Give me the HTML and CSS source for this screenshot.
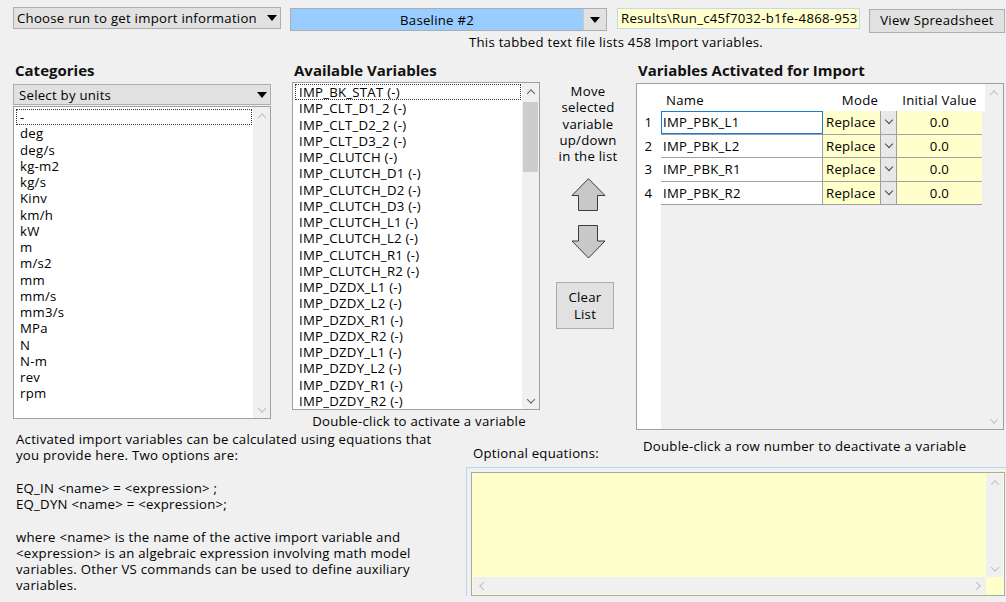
FILE: index.html
```html
<!DOCTYPE html>
<html>
<head>
<meta charset="utf-8">
<link rel="stylesheet" href="styles.css">
</head>
<body>
<div class="app">
  <div class="topbar">
    <div class="combo combo-run"><span class="combo-text">Choose run to get import information</span><span class="tri"></span></div>
    <div class="combo combo-base"><span class="base-val">Baseline #2</span><span class="base-btn"><span class="tri"></span></span></div>
    <div class="pathbox">Results\Run_c45f7032-b1fe-4868-953</div>
    <div class="btn btn-view">View Spreadsheet</div>
  </div>
  <div class="info">This tabbed text file lists 458 Import variables.</div>

  <div class="main">
    <div class="col col-cat">
      <div class="heading">Categories</div>
      <div class="combo combo-units"><span class="combo-text">Select by units</span><span class="tri"></span></div>
      <div class="listbox cat-list">
        <div class="items">
          <div class="item focus">-</div>
          <div class="item">deg</div>
          <div class="item">deg/s</div>
          <div class="item">kg-m2</div>
          <div class="item">kg/s</div>
          <div class="item">Kinv</div>
          <div class="item">km/h</div>
          <div class="item">kW</div>
          <div class="item">m</div>
          <div class="item">m/s2</div>
          <div class="item">mm</div>
          <div class="item">mm/s</div>
          <div class="item">mm3/s</div>
          <div class="item">MPa</div>
          <div class="item">N</div>
          <div class="item">N-m</div>
          <div class="item">rev</div>
          <div class="item">rpm</div>
        </div>
        <div class="vscroll light">
          <span class="sarrow up"></span>
          <span class="strack"></span>
          <span class="sarrow down"></span>
        </div>
      </div>
    </div>

    <div class="col col-avail">
      <div class="heading">Available Variables</div>
      <div class="listbox avail-list">
        <div class="items">
          <div class="item focus">IMP_BK_STAT (-)</div>
          <div class="item">IMP_CLT_D1_2 (-)</div>
          <div class="item">IMP_CLT_D2_2 (-)</div>
          <div class="item">IMP_CLT_D3_2 (-)</div>
          <div class="item">IMP_CLUTCH (-)</div>
          <div class="item">IMP_CLUTCH_D1 (-)</div>
          <div class="item">IMP_CLUTCH_D2 (-)</div>
          <div class="item">IMP_CLUTCH_D3 (-)</div>
          <div class="item">IMP_CLUTCH_L1 (-)</div>
          <div class="item">IMP_CLUTCH_L2 (-)</div>
          <div class="item">IMP_CLUTCH_R1 (-)</div>
          <div class="item">IMP_CLUTCH_R2 (-)</div>
          <div class="item">IMP_DZDX_L1 (-)</div>
          <div class="item">IMP_DZDX_L2 (-)</div>
          <div class="item">IMP_DZDX_R1 (-)</div>
          <div class="item">IMP_DZDX_R2 (-)</div>
          <div class="item">IMP_DZDY_L1 (-)</div>
          <div class="item">IMP_DZDY_L2 (-)</div>
          <div class="item">IMP_DZDY_R1 (-)</div>
          <div class="item">IMP_DZDY_R2 (-)</div>
        </div>
        <div class="vscroll dark">
          <span class="sarrow up"></span>
          <span class="strack"><span class="thumb"></span></span>
          <span class="sarrow down"></span>
        </div>
      </div>
      <div class="caption">Double-click to activate a variable</div>
    </div>

    <div class="col col-move">
      <div class="move-text">Move<br>selected<br>variable<br>up/down<br>in the list</div>
      <svg class="arrow arrow-up" width="35" height="34" viewBox="0 0 35 34">
        <polygon points="17.5,0.7 34,17.5 26.5,17.5 26.5,32.5 7.5,32.5 7.5,17.5 1,17.5" fill="#c8c8c8" stroke="#3c3c3c" stroke-width="1"/>
      </svg>
      <svg class="arrow arrow-down" width="35" height="34" viewBox="0 0 35 34">
        <polygon points="7.5,0.5 26.5,0.5 26.5,16 34,16 17.5,33 1,16 7.5,16" fill="#c8c8c8" stroke="#3c3c3c" stroke-width="1"/>
      </svg>
      <div class="btn btn-clear">Clear<br>List</div>
    </div>

    <div class="col col-active">
      <div class="heading">Variables Activated for Import</div>
      <div class="grid">
        <div class="rownums">
          <div class="rn-head"></div>
          <div class="rn">1</div>
          <div class="rn">2</div>
          <div class="rn">3</div>
          <div class="rn">4</div>
        </div>
        <div class="cells">
          <div class="grow ghead">
            <div class="c c-name">Name</div>
            <div class="c c-modehead">Mode</div>
            <div class="c c-init">Initial Value</div>
          </div>
          <div class="grow gr">
            <div class="c c-name sel">IMP_PBK_L1</div>
            <div class="c c-mode">Replace</div>
            <div class="c c-dd"><span class="chev"></span></div>
            <div class="c c-init">0.0</div>
          </div>
          <div class="grow gr">
            <div class="c c-name">IMP_PBK_L2</div>
            <div class="c c-mode">Replace</div>
            <div class="c c-dd"><span class="chev"></span></div>
            <div class="c c-init">0.0</div>
          </div>
          <div class="grow gr">
            <div class="c c-name">IMP_PBK_R1</div>
            <div class="c c-mode">Replace</div>
            <div class="c c-dd"><span class="chev"></span></div>
            <div class="c c-init">0.0</div>
          </div>
          <div class="grow gr">
            <div class="c c-name">IMP_PBK_R2</div>
            <div class="c c-mode">Replace</div>
            <div class="c c-dd"><span class="chev"></span></div>
            <div class="c c-init">0.0</div>
          </div>
          <div class="gfill"></div>
        </div>
        <div class="vscroll light grid-scroll">
          <span class="sarrow up"></span>
          <span class="strack"></span>
          <span class="sarrow down"></span>
        </div>
      </div>
    </div>
  </div>

  <div class="bottom">
    <div class="help">Activated import variables can be calculated using equations that<br>you provide here. Two options are:<br><br>EQ_IN &lt;name&gt; = &lt;expression&gt; ;<br>EQ_DYN &lt;name&gt; = &lt;expression&gt;;<br><br>where &lt;name&gt; is the name of the active import variable and<br>&lt;expression&gt; is an algebraic expression involving math model<br>variables. Other VS commands can be used to define auxiliary<br>variables.</div>
    <div class="eq">
      <div class="eq-head">
        <div class="eq-label">Optional equations:</div>
        <div class="eq-caption">Double-click a row number to deactivate a variable</div>
      </div>
      <div class="eq-frame">
        <div class="eq-box">
          <div class="eq-main">
            <div class="eq-text"></div>
            <div class="vscroll light eq-vs">
              <span class="sarrow up"></span>
              <span class="strack"></span>
              <span class="sarrow down"></span>
            </div>
          </div>
          <div class="eq-hrow">
            <div class="hscroll">
              <span class="sarrow left"></span>
              <span class="htrack"></span>
              <span class="sarrow right"></span>
            </div>
            <div class="eq-corner"></div>
          </div>
        </div>
      </div>
    </div>
  </div>
</div>
</body>
</html>
```

FILE: styles.css
```css
* { box-sizing: border-box; }

body {
  margin: 0;
  background: #f0f0f0;
  font-family: "Open Sans", "Noto Sans", sans-serif;
  font-size: 13.2px;
  letter-spacing: 0.25px;
  color: #000;
}

.app {
  width: 1006px;
  height: 602px;
  overflow: hidden;
}

/* ---------- top bar ---------- */
.topbar {
  display: flex;
  align-items: flex-start;
  padding: 7px 0 0 13px;
  height: 34px;
}

.combo {
  display: flex;
  align-items: center;
  background: #e1e1e1;
  border: 1px solid #adadad;
  height: 22px;
  white-space: nowrap;
}

.combo-text {
  flex: 1;
  padding-left: 3px;
  line-height: 18px;
}

.tri {
  width: 0;
  height: 0;
  border-left: 5.5px solid transparent;
  border-right: 5.5px solid transparent;
  border-top: 6px solid #000;
  margin-right: 3px;
}

.combo-run {
  width: 268px;
  margin-right: 9px;
}

.combo-base {
  width: 317px;
  height: 23px;
  margin-top: 1px;
  margin-right: 10px;
  background: #99ccff;
}

.base-val {
  flex: 1;
  text-align: center;
  line-height: 18px;
}

.base-btn {
  width: 23px;
  align-self: stretch;
  background: #e1e1e1;
  border-left: 1px solid #c9c9c9;
  display: flex;
  align-items: center;
  justify-content: center;
}

.base-btn .tri { margin: 0; }

.pathbox {
  width: 243px;
  height: 21px;
  margin-top: 1px;
  margin-right: 9px;
  background: #ffffcc;
  border: 1px solid #c4d8ec;
  padding-left: 3px;
  line-height: 18px;
  white-space: nowrap;
  overflow: hidden;
}

.btn {
  background: #e1e1e1;
  border: 1px solid #adadad;
  text-align: center;
}

.btn-view {
  width: 136px;
  height: 24px;
  margin-top: 2px;
  line-height: 21px;
}

.info {
  padding-left: 469px;
  line-height: 16px;
  height: 16px;
  margin-top: 0;
}

/* ---------- main ---------- */
.main {
  display: flex;
  align-items: flex-start;
  margin-top: 9px;
  height: 371px;
}

.col {
  display: flex;
  flex-direction: column;
}

.heading {
  font-weight: 700;
  font-size: 15px;
  letter-spacing: 0;
  line-height: 22px;
  height: 22px;
  padding-left: 2px;
  white-space: nowrap;
  color: #111;
}

.col-cat {
  margin-left: 13px;
  width: 258px;
}

.combo-units {
  margin-top: 3px;
  height: 21px;
}

.combo-units .combo-text { padding-left: 5px; }

.listbox {
  display: flex;
  background: #fff;
  border: 1px solid #a0a0a0;
}

.items {
  flex: 1;
  padding: 1px 1px 0 2px;
}

.item {
  height: 16.25px;
  line-height: 16px;
  padding-left: 4px;
  white-space: nowrap;
}

.item.focus {
  outline: 1px dotted #333;
  outline-offset: -1px;
}

.cat-list {
  height: 313px;
  margin-top: 1px;
}

.cat-list .items { padding-top: 2px; }

.vscroll {
  width: 17px;
  display: flex;
  flex-direction: column;
  align-items: center;
  background: #f0f0f0;
}

.sarrow {
  width: 17px;
  height: 17px;
  display: flex;
  align-items: center;
  justify-content: center;
  flex: none;
}

.sarrow::before {
  content: "";
  width: 5px;
  height: 5px;
  border-left: 1.3px solid #bfbfbf;
  border-top: 1.3px solid #bfbfbf;
}

.sarrow.up::before { transform: translateY(1.5px) rotate(45deg); }
.sarrow.down::before { transform: translateY(-1.5px) rotate(225deg); }
.sarrow.left::before { transform: translateX(1.5px) rotate(-45deg); }
.sarrow.right::before { transform: translateX(-1.5px) rotate(135deg); }

.vscroll.dark .sarrow::before { border-color: #606060; }

.strack {
  flex: 1;
  width: 100%;
  display: flex;
  justify-content: center;
}

.thumb {
  width: 15px;
  height: 70px;
  background: #cdcdcd;
  margin-top: 2px;
}

/* available */
.col-avail {
  margin-left: 21px;
  width: 248px;
}

.avail-list {
  height: 328px;
  margin-top: 1px;
}

.avail-list .items { padding-top: 1px; }

.caption {
  margin-top: 3px;
  text-align: center;
  line-height: 16px;
  white-space: nowrap;
  padding-left: 6px;
}

/* move */
.col-move {
  margin-left: 7px;
  width: 82px;
  align-items: center;
  padding-top: 24px;
}

.move-text {
  text-align: center;
  line-height: 16.25px;
}

.arrow { display: block; }
.arrow-up { margin-top: 14px; }
.arrow-down { margin-top: 13px; }

.btn-clear {
  margin-top: 23px;
  margin-right: 6px;
  width: 58px;
  height: 47px;
  line-height: 16.25px;
  padding-top: 6px;
}

/* active grid */
.col-active {
  margin-left: 7px;
  width: 368px;
}

.grid {
  margin-top: 2px;
  height: 347px;
  border: 1px solid #a0a0a0;
  background: #fff;
  display: flex;
}

.rownums {
  width: 24px;
  background: #fff;
}

.rn-head { height: 27px; }

.rn {
  height: 23.5px;
  line-height: 23px;
  text-align: center;
  padding-right: 1px;
}

.cells {
  width: 324px;
  display: flex;
  flex-direction: column;
  background: #f0f0f0;
}

.grow {
  display: flex;
  flex: none;
}

.ghead {
  height: 27px;
  background: #fff;
  align-items: flex-end;
  padding-bottom: 2px;
}

.ghead .c { line-height: 18px; }

.gr {
  height: 23.5px;
  width: 321px;
  border-bottom: 1px solid #a0a0a0;
}

.c {
  white-space: nowrap;
  line-height: 22px;
}

.c-name {
  width: 162px;
  padding-left: 2px;
  background: #fff;
  border-right: 1px solid #a0a0a0;
}

.ghead .c-name {
  padding-left: 5px;
  border-right: none;
  background: transparent;
}

.c-name.sel {
  border: 1px solid #1a7cd6;
  padding-left: 1px;
  line-height: 20px;
}

.c-modehead {
  width: 74px;
  text-align: center;
}

.c-mode {
  width: 58px;
  background: #ffffcc;
  border-right: 1px solid #a0a0a0;
  padding-left: 3px;
}

.c-dd {
  width: 16px;
  background: #e8e8e8;
  border-right: 1px solid #a0a0a0;
  display: flex;
  align-items: center;
  justify-content: center;
}

.chev {
  width: 6px;
  height: 6px;
  border-right: 1.4px solid #444;
  border-bottom: 1.4px solid #444;
  transform: translateY(-2px) rotate(45deg);
}

.c-init {
  width: 85px;
  text-align: center;
  background: #ffffcc;
}

.ghead .c-init { background: transparent; }

.gfill { flex: 1; }

.grid-scroll {
  width: 18px;
  background: #f0f0f0;
}

/* ---------- bottom ---------- */
.bottom {
  display: flex;
  align-items: flex-start;
}

.help {
  width: 466px;
  padding-left: 16px;
  padding-top: 1px;
  line-height: 16.25px;
  white-space: nowrap;
}

.eq {
  width: 540px;
  display: flex;
  flex-direction: column;
}

.eq-head {
  display: flex;
  align-items: flex-start;
  height: 37px;
}

.eq-label {
  width: 177px;
  padding-left: 7px;
  margin-top: 15px;
  line-height: 16px;
  white-space: nowrap;
}

.eq-caption {
  margin-top: 8px;
  line-height: 16px;
  white-space: nowrap;
}

.eq-frame {
  height: 129px;
  border-top: 1px solid #b9d9f3;
  border-left: 1px solid #b9d9f3;
  padding: 4px 1px 0 4px;
}

.eq-box {
  height: 124px;
  border: 1px solid #a8a8a8;
  background: #ffffcc;
  padding: 1px;
  display: flex;
  flex-direction: column;
}

.eq-main {
  flex: 1;
  display: flex;
}

.eq-text { flex: 1; }

.eq-vs {
  width: 17px;
  background: #f0f0f0;
}

.eq-hrow {
  display: flex;
  height: 17px;
}

.hscroll {
  flex: 1;
  display: flex;
  background: #f0f0f0;
}

.htrack { flex: 1; }

.eq-corner {
  width: 17px;
  background: #ffffcc;
}
```
